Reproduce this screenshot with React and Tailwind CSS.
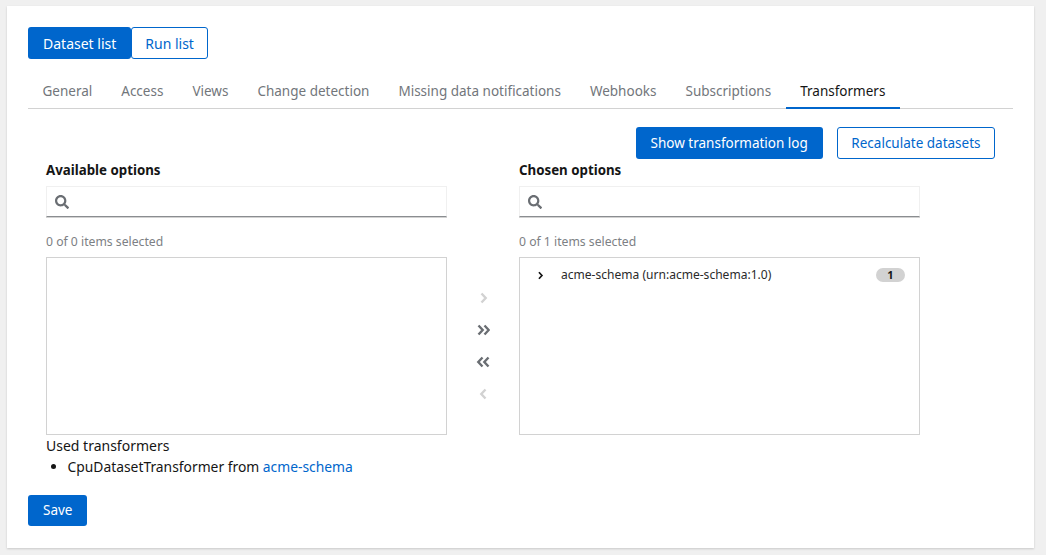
import React from 'react';

const tabs = ['General', 'Access', 'Views', 'Change detection', 'Missing data notifications', 'Webhooks', 'Subscriptions', 'Transformers'];

const SearchIcon = () => (
  <svg viewBox="0 0 512 512" className="w-[14px] h-[14px] fill-[#6a6e73]">
    <path d="M505 442.700L405.300 343c-4.500-4.500-10.600-7-17-7H372c27.600-35.300 44-79.700 44-128C416 93.100 322.900 0 208 0S0 93.100 0 208s93.100 208 208 208c48.300 0 92.700-16.400 128-44v16.300c0 6.400 2.500 12.500 7 17l99.700 99.700c9.400 9.400 24.600 9.400 33.900 0l28.300-28.300c9.400-9.400 9.400-24.600.1-34zM208 336c-70.700 0-128-57.200-128-128 0-70.700 57.200-128 128-128 70.700 0 128 57.200 128 128 0 70.700-57.200 128-128 128z" />
  </svg>
);

const Chevron = ({ left, double, className }) => (
  <svg viewBox="0 0 14 12" className={`w-[14px] h-[12px] ${className}`} fill="none" stroke="currentColor" strokeWidth="2.400">
    {double ? (
      <path d={left ? 'M6.500 1.500 2.300 6 6.500 10.500M12.500 1.500 8.300 6 12.500 10.500' : 'M2.500 1.500 6.700 6 2.500 10.500M8.500 1.500 12.700 6 8.500 10.500'} />
    ) : (
      <path d={left ? 'M9.500 1.500 5.300 6 9.500 10.500' : 'M5.500 1.500 9.700 6 5.500 10.500'} />
    )}
  </svg>
);

const Pane = ({ title, count, children }) => (
  <div className="w-[401px] flex flex-col">
    <div className="h-[20px] pt-[4px] flex items-center text-[13.300px] font-bold text-[#151515]">{title}</div>
    <div className="mt-[7px] h-[31px] flex items-center pl-[8px] border border-[#f0f0f0] border-b-[#8a8d90] shadow-[0_1px_0_#d2d2d2]">
      <SearchIcon />
    </div>
    <div className="mt-[17px] h-[16px] flex items-center text-[12.200px] text-[#7d8084]">{count}</div>
    <div className="mt-[7px] h-[178px] border border-[#d2d2d2]">{children}</div>
  </div>
);

export default function App() {
  return (
    <div className="w-[1046px] h-[555px] bg-[#f0f0f0] pt-[6px] pl-[7px] font-['Noto_Sans',sans-serif]">
      <div className="w-[1027px] h-[542px] bg-white shadow-[0_1px_2px_rgba(3,3,3,0.16)] pt-[21px] px-[21px]">
        <div className="flex">
          <button className="h-[32px] px-[15px] bg-[#0066cc] text-white text-[14px] rounded-[3px]">Dataset list</button>
          <button className="h-[32px] px-[13px] bg-white text-[#0066cc] text-[14px] rounded-[3px] border border-[#0066cc]">Run list</button>
        </div>

        <div className="mt-[17px] w-[985px] flex border-b border-[#d2d2d2]">
          {tabs.map((tab) => (
            <div
              key={tab}
              className={tab === 'Transformers'
                ? 'h-[33px] px-[14.500px] -mb-px flex items-center text-[13.500px] text-[#151515] border-b-2 border-[#0066cc]'
                : 'h-[33px] px-[14.500px] -mb-px flex items-center text-[13.500px] text-[#72767b] border-b-2 border-transparent'}
            >
              {tab}
            </div>
          ))}
        </div>

        <div className="mt-[18px] w-[967px] flex justify-end gap-[14px]">
          <button className="h-[32px] px-[15px] bg-[#0066cc] text-white text-[13.500px] rounded-[3px]">Show transformation log</button>
          <button className="h-[32px] px-[13.500px] bg-white text-[#0066cc] text-[13.500px] rounded-[3px] border border-[#0066cc]">Recalculate datasets</button>
        </div>

        <div className="ml-[18px] flex">
          <Pane title="Available options" count="0 of 0 items selected" />
          <div className="w-[72px] pt-[133px] flex flex-col items-center gap-[20px]">
            <Chevron className="text-[#d2d2d2]" />
            <Chevron double className="text-[#6a6e73]" />
            <Chevron double left className="text-[#6a6e73]" />
            <Chevron left className="text-[#d2d2d2]" />
          </div>
          <Pane title="Chosen options" count="0 of 1 items selected">
            <div className="h-[34px] flex items-center pl-[15px] pr-[14px]">
              <Chevron className="text-[#151515] !w-[10px] !h-[9px]" />
              <span className="ml-[16px] flex-1 text-[12.050px] text-[#2a2a2a]">acme-schema (urn:acme-schema:1.0)</span>
              <span className="w-[29px] h-[14px] rounded-full bg-[#d2d2d2] flex items-center justify-center text-[11px] font-bold text-[#151515]">1</span>
            </div>
          </Pane>
        </div>

        <div className="ml-[18px] text-[14px] leading-[21px] text-[#151515]">
          <div>Used transformers</div>
          <ul className="list-disc pl-[21.500px] text-[13.850px]">
            <li>CpuDatasetTransformer from <a href="#" className="text-[#0066cc]">acme-schema</a></li>
          </ul>
        </div>

        <button className="mt-[18px] h-[31px] px-[15px] bg-[#0066cc] text-white text-[13.500px] rounded-[3px]">Save</button>
      </div>
    </div>
  );
}
